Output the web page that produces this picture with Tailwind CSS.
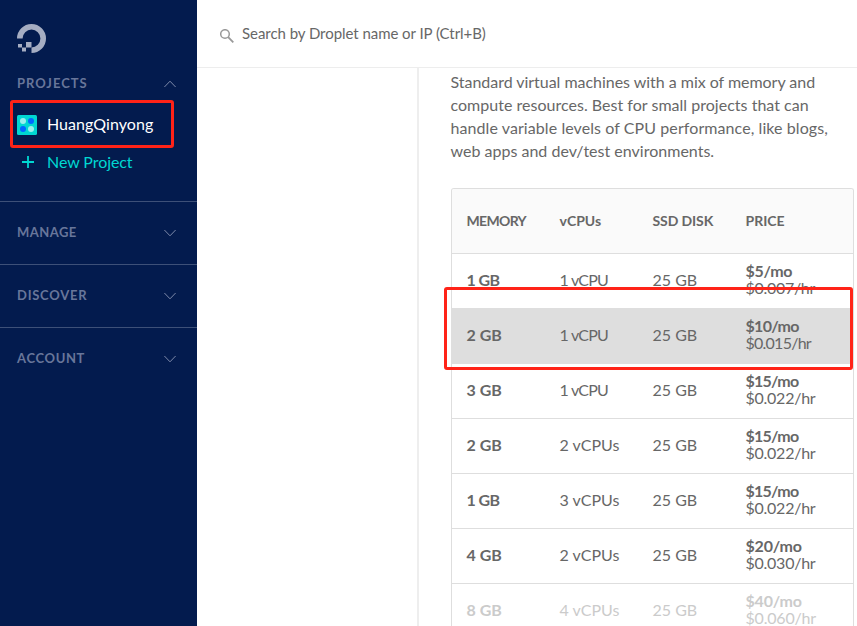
<!DOCTYPE html>
<html lang="en">
<head>
<meta charset="utf-8">
<title>Droplets</title>
<script src="https://cdn.jsdelivr.net/npm/@tailwindcss/browser@4"></script>
</head>
<body class="relative flex h-[626px] w-[857px] overflow-hidden bg-white font-['Lato','Liberation_Sans',sans-serif] text-base text-[#676767]">
<aside class="h-full w-[197px] shrink-0 bg-[#031b4e] text-[13px] font-bold text-[#68769a]">
  <div class="h-[201px] pt-6 pl-[17px]">
    <svg class="h-[29px] w-[29px]" viewBox="0 0 29 29" fill="#a5adc2"><path d="M14.5 29v-5.6A8.9 8.9 0 1 0 5.6 14.5H0A14.5 14.5 0 1 1 14.5 29Z"/><path d="M9 18h5.5v5.4H9zM5 23.4h4v4.2H5zM1 20h4v3.4H1z"/></svg>
    <div class="mt-[21px] flex h-5 items-center justify-between pr-[21px]"><span class="tracking-[.98px]">PROJECTS</span>
      <svg class="h-2 w-3" viewBox="0 0 12 8" fill="none" stroke="#7e8aaa"><path d="M.4 7 6 1.2 11.6 7"/></svg></div>
    <div class="mt-[21px] flex h-5 items-center text-base font-normal tracking-[.05px] text-white">
      <svg class="mr-[10px] h-5 w-5" viewBox="0 0 20 20"><rect width="20" height="20" rx="1.5" fill="#00d7d2"/><circle cx="6" cy="6" r="3" fill="#99efed"/><circle cx="14" cy="6" r="3" fill="#0069ff"/><circle cx="6" cy="14" r="3" fill="#0069ff"/><circle cx="14" cy="14" r="3" fill="#99efed"/></svg><span class="pb-[2px]">HuangQinyong</span></div>
    <div class="mt-[17px] flex h-5 items-center text-base font-normal tracking-[-.08px] text-[#00d7d2]">
      <svg class="mr-[13px] ml-[5px] h-3 w-3" viewBox="0 0 12 12" stroke="#00d7d2" stroke-width="1.8"><path d="M6 0v12M0 6h12"/></svg><span>New Project</span></div>
  </div>
  <div class="flex h-[63px] items-center justify-between border-t border-[#3d5078] pr-[21px] pl-[17px]"><span class="tracking-[.45px]">MANAGE</span><svg class="h-2 w-3" viewBox="0 0 12 8" fill="none" stroke="#7e8aaa"><path d="M.4 1 6 6.8 11.6 1"/></svg></div>
  <div class="flex h-[63px] items-center justify-between border-t border-[#3d5078] pr-[21px] pl-[17px]"><span class="tracking-[.75px]">DISCOVER</span><svg class="h-2 w-3" viewBox="0 0 12 8" fill="none" stroke="#7e8aaa"><path d="M.4 1 6 6.8 11.6 1"/></svg></div>
  <div class="flex h-[63px] items-center justify-between border-t border-[#3d5078] pr-[21px] pl-[17px]"><span class="tracking-[.65px]">ACCOUNT</span><svg class="h-2 w-3" viewBox="0 0 12 8" fill="none" stroke="#7e8aaa"><path d="M.4 1 6 6.8 11.6 1"/></svg></div>
</aside>
<div class="flex h-full w-[660px] flex-col">
  <header class="flex h-[68px] shrink-0 items-center border-b border-[#ededed] pl-[23px] text-[15px]">
    <svg class="mt-1 mr-2 h-[14px] w-[14px]" viewBox="0 0 14 14" fill="none" stroke="#999"><circle cx="5" cy="5" r="4.3" stroke-width="1.5"/><path d="m8.2 8.2 5.1 5.1" stroke-width="1.8"/></svg><span class="tracking-[-.05px]">Search by Droplet name or IP (Ctrl+B)</span>
  </header>
  <div class="flex min-h-0 flex-1">
    <div class="w-[222px] shrink-0 border-r-2 border-[#eee]"></div>
    <main class="w-[438px] pl-8">
      <p class="-ml-[.5px] mt-[2px] h-[118px] leading-[23px] whitespace-nowrap">
        <span class="tracking-[-.03px]">Standard virtual machines with a mix of memory and</span><br>
        <span class="tracking-[.02px]">compute resources. Best for small projects that can</span><br>
        <span class="tracking-[.08px]">handle variable levels of CPU performance, like blogs,</span><br>
        <span class="tracking-[.01px]">web apps and dev/test environments.</span>
      </p>
      <div class="w-[403px] rounded-t-[3px] border border-b-0 border-[#dedede]">
        <div class="grid h-[65px] grid-cols-[93px_93px_93px_1fr] items-center rounded-t-[2px] border-b border-[#dedede] bg-[#fafafa] pl-[14.5px] text-sm font-bold"><span class="tracking-[-.65px]">MEMORY</span><span>vCPUs</span><span class="tracking-[-.1px]">SSD DISK</span><span>PRICE</span></div>
        <div class="grid h-[55px] grid-cols-[93px_93px_93px_1fr] items-center border-b border-[#dedede] pb-[3px] pl-[14.5px] leading-[17px]"><b class="tracking-[-.6px]">1 GB</b><span class="tracking-[-.8px]">1 vCPU</span><span>25 GB</span><div class="pb-[2px]"><b class="tracking-[-.3px]">$5/mo</b><br><span class="tracking-[-.3px]">$0.007/hr</span></div></div>
        <div class="grid h-[55px] grid-cols-[93px_93px_93px_1fr] items-center border-b border-[#dedede] bg-[#dedede] pb-[3px] pl-[14.5px] leading-[17px]"><b>2 GB</b><span class="tracking-[-.8px]">1 vCPU</span><span>25 GB</span><div class="pb-[2px]"><b class="tracking-[-.7px]">$10/mo</b><br><span class="tracking-[-.75px]">$0.015/hr</span></div></div>
        <div class="grid h-[55px] grid-cols-[93px_93px_93px_1fr] items-center border-b border-[#dedede] pb-[3px] pl-[14.5px] leading-[17px]"><b>3 GB</b><span class="tracking-[-.8px]">1 vCPU</span><span>25 GB</span><div class="pb-[2px]"><b class="tracking-[-.75px]">$15/mo</b><br><span class="tracking-[-.25px]">$0.022/hr</span></div></div>
        <div class="grid h-[55px] grid-cols-[93px_93px_93px_1fr] items-center border-b border-[#dedede] pb-[3px] pl-[14.5px] leading-[17px]"><b>2 GB</b><span>2 vCPUs</span><span>25 GB</span><div class="pb-[2px]"><b class="tracking-[-.75px]">$15/mo</b><br><span class="tracking-[-.25px]">$0.022/hr</span></div></div>
        <div class="grid h-[55px] grid-cols-[93px_93px_93px_1fr] items-center border-b border-[#dedede] pb-[3px] pl-[14.5px] leading-[17px]"><b class="tracking-[-.6px]">1 GB</b><span>3 vCPUs</span><span>25 GB</span><div class="pb-[2px]"><b class="tracking-[-.75px]">$15/mo</b><br><span class="tracking-[-.25px]">$0.022/hr</span></div></div>
        <div class="grid h-[55px] grid-cols-[93px_93px_93px_1fr] items-center border-b border-[#dedede] pb-[3px] pl-[14.5px] leading-[17px]"><b>4 GB</b><span>2 vCPUs</span><span>25 GB</span><div class="pb-[2px]"><b class="tracking-[-.2px]">$20/mo</b><br><span class="tracking-[-.25px]">$0.030/hr</span></div></div>
        <div class="grid h-[55px] grid-cols-[93px_93px_93px_1fr] items-center border-b border-[#dedede] pb-[3px] pl-[14.5px] leading-[17px] text-[#cbcbcb]"><b>8 GB</b><span>4 vCPUs</span><span>25 GB</span><div class="pb-[2px]"><b class="tracking-[-.2px]">$40/mo</b><br><span class="tracking-[-.2px]">$0.060/hr</span></div></div>
      </div>
    </main>
  </div>
</div>
<div class="absolute top-[100px] left-[10px] h-12 w-[164px] rounded-[3px] border-3 border-[#ff2318]"></div>
<div class="absolute top-[287px] left-[444px] h-[83px] w-[409px] rounded-[3px] border-3 border-[#ff2318]"></div>
</body>
</html>
